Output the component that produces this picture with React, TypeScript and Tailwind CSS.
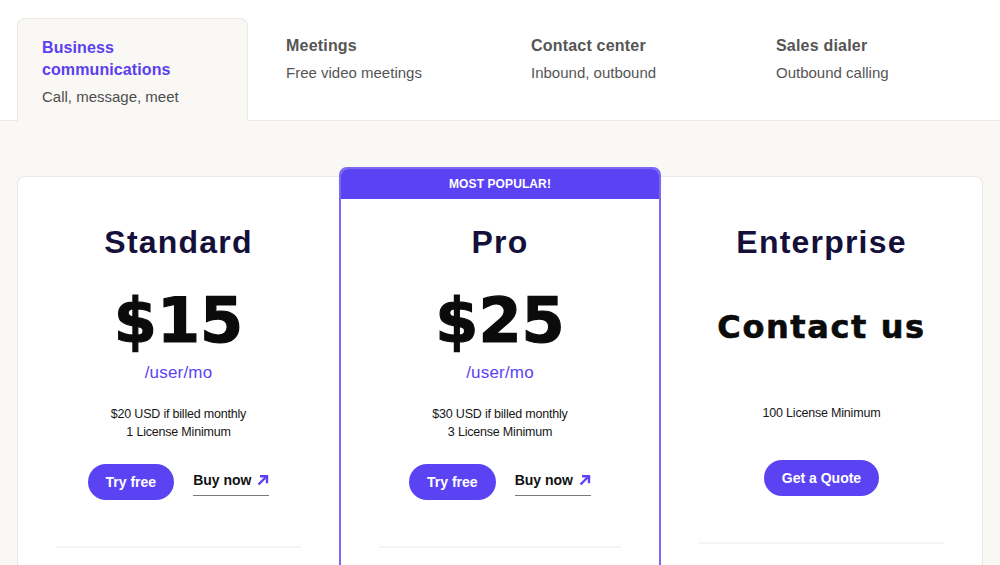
import React from "react";

const sans = { fontFamily: '"Liberation Sans", Arial, sans-serif' };
const wide = { fontFamily: '"DejaVu Sans", "Liberation Sans", sans-serif' };

function Arrow() {
  return (
    <svg width="12" height="12" viewBox="0 0 12 12" className="ml-[6px] mt-[-2px]">
      <path d="M1.5 10.5 L9.5 2.5" stroke="#5b43f4" strokeWidth="2.4" strokeLinecap="butt" fill="none" />
      <path d="M3 2.2 H10 V9.2" stroke="#5b43f4" strokeWidth="2.4" strokeLinejoin="miter" fill="none" />
    </svg>
  );
}

function Buttons() {
  return (
    <div className="flex items-center justify-center gap-[19px]">
      <button className="h-9 rounded-full bg-[#5b43f4] px-[18px] text-[14px] font-bold text-white">Try free</button>
      <span className="flex items-center border-b border-[#7a7a7a] pb-[4px] pt-[2px] text-[14px] font-bold text-[#111]">
        Buy now
        <Arrow />
      </span>
    </div>
  );
}

function PriceBody({ price, monthly, min }: { price: string; monthly: string; min: string }) {
  return (
    <>
      <div
        className="mt-[29px] text-[62px] font-bold leading-[62px] text-[#0b0b0b] [-webkit-text-stroke:1.2px_#0b0b0b]"
        style={wide}
      >
        {price}
      </div>
      <div className="mt-[9px] text-[17px] leading-[24px] tracking-[0.2px] text-[#5b43f4]">/user/mo</div>
      <div className="mt-[20px] text-[12.5px] leading-[18px] tracking-[-0.2px] text-[#161616]">
        <div>{monthly}</div>
        <div>{min}</div>
      </div>
      <div className="mt-[23px]">
        <Buttons />
      </div>
      <div className="mx-[38px] mt-[46px] h-[2px] bg-[#f6f4f1]" />
    </>
  );
}

function Title({ children }: { children: React.ReactNode }) {
  return <div className="text-[32px] font-bold leading-[38px] tracking-[1.2px] text-[#15103a]">{children}</div>;
}

export default function App() {
  const tabs = [
    { t: "Meetings", s: "Free video meetings" },
    { t: "Contact center", s: "Inbound, outbound" },
    { t: "Sales dialer", s: "Outbound calling" },
  ];
  return (
    <div className="h-[565px] w-[1000px] overflow-hidden bg-[#f9f8f5]" style={sans}>
      <div className="border-b border-[#ebe8e3] bg-white px-[17px] pt-[18px]">
        <div className="flex gap-[14px]">
          <div className="mb-[-1px] h-[103px] w-[231px] rounded-t-lg border border-b-0 border-[#ece9e4] bg-[#f9f8f5] pl-[24px] pt-[18px]">
            <div className="text-[16px] font-bold leading-[22px] tracking-[0.1px] text-[#5a40ef]">
              Business
              <br />
              communications
            </div>
            <div className="mt-[5px] text-[15px] leading-[22px] text-[#4d4d4d]">Call, message, meet</div>
          </div>
          {tabs.map((x) => (
            <div key={x.t} className="h-[102px] w-[231px] pl-[24px] pt-[17px]">
              <div className="text-[16px] font-bold leading-[22px] tracking-[0.2px] text-[#555]">{x.t}</div>
              <div className="mt-[5px] text-[15px] leading-[22px] text-[#555]">{x.s}</div>
            </div>
          ))}
        </div>
      </div>

      <div className="flex px-[17px] pt-[46px]">
        <div className="mt-[9px] h-[420px] w-[322px] rounded-tl-lg border border-r-0 border-[#ece9e4] bg-white pt-[46px] text-center">
          <Title>Standard</Title>
          <PriceBody price="$15" monthly="$20 USD if billed monthly" min="1 License Minimum" />
        </div>

        <div className="h-[430px] w-[322px] overflow-hidden rounded-t-lg border-2 border-[#7a69f3] bg-white text-center">
          <div className="flex h-[30px] items-center justify-center bg-[#5b43f4] text-[12px] font-bold tracking-[0.1px] text-white">
            MOST POPULAR!
          </div>
          <div className="pt-[24px]">
            <Title>Pro</Title>
            <PriceBody price="$25" monthly="$30 USD if billed monthly" min="3 License Minimum" />
          </div>
        </div>

        <div className="mt-[9px] h-[420px] w-[322px] rounded-tr-lg border border-l-0 border-[#ece9e4] bg-white pt-[46px] text-center">
          <Title>Enterprise</Title>
          <div
            className="mt-[46px] text-[32px] font-bold leading-[40px] tracking-[1.6px] text-[#0b0b0b] [-webkit-text-stroke:0.6px_#0b0b0b]"
            style={wide}
          >
            Contact us
          </div>
          <div className="mt-[57px] text-[12.5px] leading-[18px] tracking-[-0.2px] text-[#161616]">100 License Minimum</div>
          <div className="mt-[38px] flex justify-center">
            <button className="h-9 rounded-full bg-[#5b43f4] px-[18px] text-[14px] font-bold text-white">Get a Quote</button>
          </div>
          <div className="mx-[38px] mt-[46px] h-[2px] bg-[#f6f4f1]" />
        </div>
      </div>
    </div>
  );
}
